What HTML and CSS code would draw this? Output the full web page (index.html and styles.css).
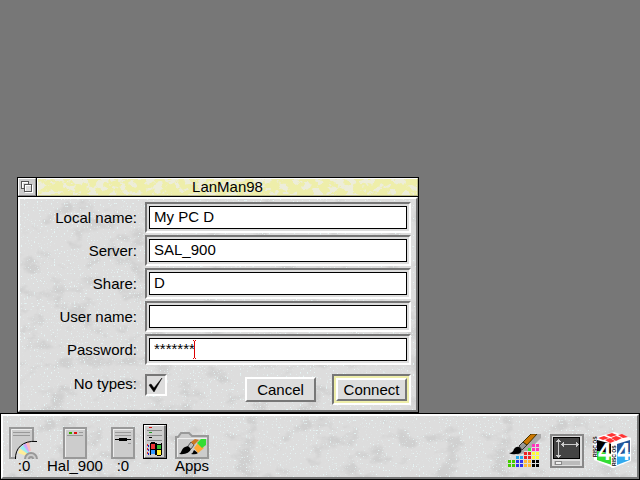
FILE: index.html
```html
<!DOCTYPE html>
<html lang="en">
  <head>
    <meta charset="UTF-8" />
    <meta name="viewport" content="width=device-width, initial-scale=1.0" />
    <title>LanMan98</title>
    <link rel="stylesheet" href="styles.css">
  </head>
  <body>
    <main class="desktop">
      <form class="window" onsubmit="return false">
        <header class="titlebar">
          <button class="back" type="button" aria-label="Send to back">
            <svg width="12" height="12" viewBox="0 0 12 12" shape-rendering="crispEdges">
              <path d="M.5.5h7v7h-7z" fill="#ddd" stroke="#555" />
              <path d="M1.5 7V1.5H7" fill="none" stroke="#fff" />
              <path d="M3.5 3.5h7v7h-7z" fill="#ddd" stroke="#555" />
              <path d="M4.5 10V4.5H10M11.5 4v7.500H4" fill="none" stroke="#fff" />
            </svg>
          </button>
          <h1 class="title">LanMan98</h1>
        </header>

        <div class="content">
          <div class="row">
            <label for="local">Local name:</label>
            <span class="well"><input id="local" type="text" value="My PC D" /></span>
          </div>
          <div class="row">
            <label for="server">Server:</label>
            <span class="well"><input id="server" type="text" value="SAL_900" /></span>
          </div>
          <div class="row">
            <label for="share">Share:</label>
            <span class="well"><input id="share" type="text" value="D" /></span>
          </div>
          <div class="row">
            <label for="user">User name:</label>
            <span class="well"><input id="user" type="text" value="" /></span>
          </div>
          <div class="row">
            <label for="password">Password:</label>
            <span class="well">
              <input id="password" type="text" value="*******" />
              <svg class="caret" width="3" height="19" viewBox="0 0 3 19" shape-rendering="crispEdges">
                <path d="M0 0h1v1H0zM2 0h1v1H2zM1 1h1v17H1zM0 18h1v1H0zM2 18h1v1H2z" fill="#d00" />
              </svg>
            </span>
          </div>
          <div class="row actions">
            <label for="types">No types:</label>
            <input id="types" class="tick" type="checkbox" checked />
            <div class="buttons">
              <button type="button" class="button">Cancel</button>
              <span class="default"><button type="submit" class="button">Connect</button></span>
            </div>
          </div>
        </div>
      </form>

      <footer class="iconbar">
        <div class="icon">
          <svg width="30" height="32" viewBox="0 0 30 32">
            <path d="M1 1h23v30H1z" fill="#ccc" stroke="#999" stroke-width="2" />
            <path d="M2.500 30V2.500H23" fill="none" stroke="#eee" />
            <path d="M4 5.500h17M4 8.500h17" stroke="#999" />
            <path d="M7 32C6 22 13 13 28 14l2 18z" fill="#ddd" />
            <path d="M9 26l2-4 8 5-1 2z" fill="#fe9" />
            <path d="M11 21l3-3 6 7-1 2z" fill="#9ee" />
            <path d="M14 18l3-2 4 8-2 1z" fill="#caf" />
            <path d="M17 16l3-1 2 9h-2z" fill="#fbb" />
            <path d="M6.500 32C6 22 13 13 28 14.500" fill="none" stroke="#000" />
            <path d="M16 32a6 6 0 1 1 12 0M20 32a2 2 0 1 1 4 0" fill="#ccc" stroke="#999" stroke-width="2" />
          </svg>
          <span>:0</span>
        </div>
        <div class="icon">
          <svg width="24" height="32" viewBox="0 0 24 32" shape-rendering="crispEdges">
            <path d="M1 1h22v30H1z" fill="#ccc" stroke="#999" stroke-width="2" />
            <path d="M2.500 30V2.500H22" fill="none" stroke="#eee" />
            <path d="M4 5.500h16M4 8.500h16" stroke="#999" />
            <path d="M4 4h12v4H4z" fill="#ccc" />
            <path d="M6 5h3v2H6z" fill="#3a0" />
            <path d="M11 5h3v2h-3z" fill="#d11" />
          </svg>
          <span>Hal_900</span>
        </div>
        <div class="icon">
          <svg width="24" height="32" viewBox="0 0 24 32" shape-rendering="crispEdges">
            <path d="M1 1h22v30H1z" fill="#ccc" stroke="#999" stroke-width="2" />
            <path d="M2.500 30V2.500H22" fill="none" stroke="#eee" />
            <path d="M4 5.500h16M4 8.500h16M17 16.500h3" stroke="#999" />
            <path d="M4 12h16v1H4zM8 11h8v3H8z" fill="#000" />
          </svg>
          <span>:0</span>
        </div>
        <div class="icon plain">
          <svg width="24" height="35" viewBox="0 0 24 35" shape-rendering="crispEdges">
            <path d="M.5.5h23v34H.5z" fill="#ccc" stroke="#000" />
            <path d="M21 2h2v32H2v-1h19z" fill="#777" />
            <path d="M1.500 33V1.500H21" fill="none" stroke="#fff" />
            <path d="M4 6.500h15M4 11.500h15M4 16.500h15" stroke="#888" />
            <path d="M6 3h3v1H6z" fill="#d11" />
            <path d="M6 8h3v1H6z" fill="#292" />
            <path d="M6 13h3v1H6z" fill="#000" />
            <path d="M4 20h1v2H4zM4 24h1v2H4zM4 28h1v2H4z" fill="#d22" />
            <path d="M5 21h1v2H5zM5 25h1v2H5zM5 29h1v2H5z" fill="#22c" />
            <path d="M7 19q3-2 6 0t6 0v12q-3 2-6 0t-6 0z" fill="#000" />
            <path d="M8 20h4v5H8z" fill="#e33" />
            <path d="M14 21h4v4h-4z" fill="#3b3" />
            <path d="M8 26h4v4H8z" fill="#39f" />
            <path d="M14 26h4v5h-4z" fill="#fe3" />
          </svg>
        </div>
        <div class="icon">
          <svg width="34" height="28" viewBox="0 0 34 28">
            <path d="M1 27V6h2l3-4h8l3 3h16v22z" fill="#ccc" stroke="#999" stroke-width="2" />
            <path d="M2.500 26V7.500H32" fill="none" stroke="#eee" />
            <path d="M4 23q2-1 3-4t6-4l3 3q-2 6-12 5z" fill="#000" />
            <path d="M13 15l3-4 3 3-3 4z" fill="#bbb" stroke="#555" />
            <path d="M16 11l4-3 4 1-5 5z" fill="#c72" />
            <path d="M16 23q2-1 3-4l4 3q-2 2-7 1z" fill="#000" />
            <path d="M19 17l4-5 6 5-6 5z" fill="#fa3" />
            <path d="M22 12l4-4h5v6l-4 3z" fill="#3d3" />
          </svg>
          <span>Apps</span>
        </div>

        <div class="spacer"></div>

        <div class="icon app">
          <svg width="34" height="34" viewBox="0 0 34 34">
            <path d="M8 21L28 0h5v4L18 19z" fill="#aaa" />
            <g shape-rendering="crispEdges">
              <path d="M24 10h8v8h-8z" fill="#f3b" />
              <path d="M20 14h4v4h-4z" fill="#3e3" />
              <path d="M16 18h8v8h-8z" fill="#e22" />
              <path d="M8 22h8v4H8z" fill="#2ae" />
              <path d="M24 18h8v8h-8z" fill="#ff3" />
              <path d="M0 26h8v8H0z" fill="#4c0" />
              <path d="M8 26h8v8H8z" fill="#33e" />
              <path d="M16 26h8v8h-8z" fill="#fb3" />
              <path d="M24 26h8v8h-8z" fill="#000" />
              <path d="M0 29.500h32M0 33.500h32M8 25.500h24M16 21.500h16M16 17.500h16M24 13.500h8M3.500 26v8M7.500 26v8M11.500 22v12M15.500 22v12M19.500 18v16M23.500 14v20M27.500 10v24M31.500 10v24" stroke="#ddd" />
            </g>
            <path d="M1 19q4 0 5-4 3-4 7-1 2 6-5 6-4 1-7-1z" fill="#000" />
            <path d="M11 12l4-4 4 3-5 5z" fill="#999" stroke="#333" />
            <path d="M15 8l8-8h6L19 11z" fill="#c70" stroke="#430" />
          </svg>
        </div>
        <div class="icon app">
          <svg width="34" height="34" viewBox="0 0 34 34" shape-rendering="crispEdges">
            <path d="M1 1h32v32H1z" fill="#ddd" stroke="#888" stroke-width="2" />
            <path d="M3.500 3.500h26v21h-26z" fill="#444" stroke="#000" />
            <path d="M8.500 6v17M12 10.500h16" stroke="#ccc" />
            <path d="M6 8h5L8.500 5zM6 21h5l-2.500 3zM14 8v5l-3-2.500zM26 8v5l3-2.500z" fill="#ccc" />
            <path d="M4 27h26v4H4z" fill="#bbb" />
            <path d="M5.500 27.500h6v3h-6z" fill="#eee" stroke="#888" />
          </svg>
        </div>
        <div class="icon app">
          <svg class="cube" width="40" height="36" viewBox="0 0 40 36">
            <path d="M1 6L22 0l17 6v23l-18 7L2 28z" fill="#fff" />
            <path d="M6 6l6-2 5 2-6 2zM14 3l6-2 5 2-6 2zM19 6l5-2 6 2-6 3zM13 8l5-2 5 3-5 2zM26 3l4-1 6 3-5 1z" fill="#f33" />
            <path d="M5 8l15 4v10L5 19z" fill="#000" />
            <path d="M5 19l15 3v11L5 28z" fill="#3d3" />
            <path d="M25 12l13-4v12l-13 3z" fill="#259" />
            <path d="M25 23l13-3v8l-13 5z" fill="#3ae" />
            <path d="M19 11l6 1v22l-4 2-2-2z" fill="#fff" />
            <text class="four" x="6" y="28">4</text>
            <text class="four" x="25" y="28">4</text>
            <text class="edge" transform="translate(5 25) rotate(-90)">RISC OS</text>
            <text class="edge" transform="translate(24 34) rotate(-90)">RISC OS</text>
          </svg>
        </div>
      </footer>
    </main>
  </body>
</html>
```

FILE: styles.css
```css
* {
  box-sizing: border-box;
}
body {
  margin: 0;
  background: #777;
  font-family: "Liberation Sans", Arial, sans-serif;
  font-size: 15px;
  line-height: 18px;
  color: #000;
}
button,
input {
  font: inherit;
  color: inherit;
  margin: 0;
  border-radius: 0;
}
svg {
  display: block;
}
.desktop {
  display: flex;
  flex-direction: column;
  justify-content: flex-end;
  min-height: 100vh;
}

/* Speckled stone used behind the window and the icon bar */
.content,
.iconbar {
  background: #ddd url("data:image/svg+xml,%3Csvg xmlns='http://www.w3.org/2000/svg' width='256' height='256'%3E%3Cfilter id='a' x='0' y='0' width='1' height='1' color-interpolation-filters='sRGB'%3E%3CfeTurbulence type='fractalNoise' baseFrequency='.04 .06' numOctaves='6' seed='4' stitchTiles='stitch'/%3E%3CfeColorMatrix values='0 0 0 0 .77 0 0 0 0 .77 0 0 0 0 .77 0 0 0 5 -2.7'/%3E%3C/filter%3E%3Cfilter id='b' x='0' y='0' width='1' height='1' color-interpolation-filters='sRGB'%3E%3CfeTurbulence type='fractalNoise' baseFrequency='.7' numOctaves='1' seed='9' stitchTiles='stitch'/%3E%3CfeColorMatrix values='0 0 0 0 .9 0 0 0 0 .96 0 0 0 0 .96 0 0 0 12 -7.8'/%3E%3C/filter%3E%3Crect width='256' height='256' filter='url(%23a)' opacity='.55'/%3E%3Crect width='256' height='256' filter='url(%23b)'/%3E%3C/svg%3E");
}

/* Window */
.window {
  width: 402px;
  max-width: calc(100% - 17px);
  margin-left: 17px;
  border: 1px solid #000;
}
.titlebar {
  display: flex;
  gap: 1px;
  height: 19px;
  background: #000;
  border-bottom: 1px solid #000;
}
.back {
  display: flex;
  align-items: center;
  justify-content: center;
  width: 18px;
  padding: 0;
  background: #ccc;
  border: 1px solid;
  border-color: #fff #888 #888 #fff;
}
.title {
  flex: 1;
  margin: 0;
  border: 1px solid;
  border-color: #fff #bb8 #bb8 #fff;
  font-size: 15px;
  font-weight: normal;
  line-height: 16px;
  text-align: center;
  background: #eea url("data:image/svg+xml,%3Csvg xmlns='http://www.w3.org/2000/svg' width='400' height='64'%3E%3Cfilter id='a' x='0' y='0' width='1' height='1' color-interpolation-filters='sRGB'%3E%3CfeTurbulence type='fractalNoise' baseFrequency='.12 .16' numOctaves='5' seed='3'/%3E%3CfeColorMatrix values='0 0 0 0 .93 0 0 0 0 .93 0 0 0 0 .9 0 0 0 14 -7.2'/%3E%3C/filter%3E%3Crect width='400' height='64' filter='url(%23a)' opacity='.8'/%3E%3C/svg%3E");
}
.content {
  display: flex;
  flex-direction: column;
  gap: 2px;
  padding: 3px 5px 5px 0;
  border: 2px solid;
  border-color: #fff #777 #777 #fff;
}

/* Form */
.row {
  display: flex;
  align-items: center;
  gap: 8px;
}
.row label {
  width: 117px;
  text-align: right;
}
.well {
  position: relative;
  flex: 1;
  padding: 2px;
  background: #ddd;
  border: 2px solid;
  border-color: #777 #fff #fff #777;
}
.well input {
  display: block;
  width: 100%;
  height: 23px;
  padding: 0 4px 2px;
  background: #fff;
  border: 1px solid #000;
  outline: none;
}
.caret {
  position: absolute;
  left: 46px;
  top: 4px;
}
.actions {
  align-items: flex-start;
  margin-top: 7px;
}
.actions label {
  padding-top: 1px;
}
.tick {
  appearance: none;
  width: 22px;
  height: 22px;
  border: 2px solid;
  border-color: #777 #fff #fff #777;
  background: #ddd url("data:image/svg+xml,%3Csvg xmlns='http://www.w3.org/2000/svg' width='18' height='18'%3E%3Cpath d='M2 9l2-1 3 4 8-10-8 14z' stroke='%23000' stroke-width='.5'/%3E%3C/svg%3E") center no-repeat;
}
.buttons {
  display: flex;
  flex: 1;
  align-items: center;
  justify-content: flex-end;
  gap: 16px;
}
.button {
  width: 71px;
  height: 25px;
  padding: 0;
  line-height: 18px;
  background: #ddd;
  border: 2px solid;
  border-color: #fff #777 #777 #fff;
}
.default {
  padding: 2px;
  background: #eea;
  border: 2px solid;
  border-color: #777 #fff #fff #777;
}
.default .button {
  display: block;
  height: 23px;
}

/* Icon bar */
.iconbar {
  display: flex;
  align-items: flex-end;
  gap: 8px;
  height: 67px;
  padding: 0 5px 4px 6px;
  border: 3px solid;
  border-color: #fff #777 #777 #fff;
  outline: 1px solid #000;
  outline-offset: -1px;
}
.icon {
  display: flex;
  flex-direction: column;
  align-items: center;
}
.icon span {
  line-height: 14px;
}
.plain {
  padding-bottom: 14px;
}
.app {
  padding-bottom: 5px;
}
.spacer {
  flex: 1;
}
.cube .four {
  font-size: 24px;
  font-weight: bold;
  fill: #fff;
}
.cube .edge {
  font-size: 5px;
  font-weight: bold;
}
```
